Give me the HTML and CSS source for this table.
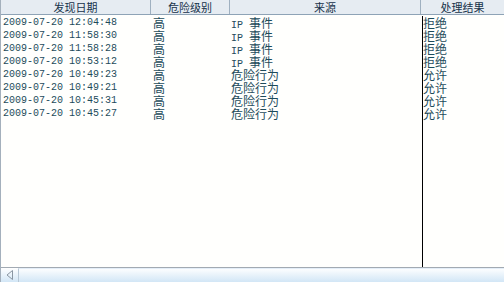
FILE: index.html
```html
<!DOCTYPE html>
<html lang="zh">
<head>
<meta charset="utf-8">
<link rel="stylesheet" href="styles.css">
</head>
<body>
<div class="grid">
  <div class="head">
    <div class="hc">发现日期</div>
    <div class="hc">危险级别</div>
    <div class="hc">来源</div>
    <div class="hc">处理结果</div>
  </div>
  <div class="body">
    <div class="col c1">
      <div class="cell mono">2009-07-20 12:04:48</div>
      <div class="cell mono">2009-07-20 11:58:30</div>
      <div class="cell mono">2009-07-20 11:58:28</div>
      <div class="cell mono">2009-07-20 10:53:12</div>
      <div class="cell mono">2009-07-20 10:49:23</div>
      <div class="cell mono">2009-07-20 10:49:21</div>
      <div class="cell mono">2009-07-20 10:45:31</div>
      <div class="cell mono">2009-07-20 10:45:27</div>
    </div>
    <div class="col c2">
      <div class="cell">高</div>
      <div class="cell">高</div>
      <div class="cell">高</div>
      <div class="cell">高</div>
      <div class="cell">高</div>
      <div class="cell">高</div>
      <div class="cell">高</div>
      <div class="cell">高</div>
    </div>
    <div class="col c3">
      <div class="cell"><span class="ip">IP </span>事件</div>
      <div class="cell"><span class="ip">IP </span>事件</div>
      <div class="cell"><span class="ip">IP </span>事件</div>
      <div class="cell"><span class="ip">IP </span>事件</div>
      <div class="cell">危险行为</div>
      <div class="cell">危险行为</div>
      <div class="cell">危险行为</div>
      <div class="cell">危险行为</div>
    </div>
    <div class="col c4">
      <div class="cell">拒绝</div>
      <div class="cell">拒绝</div>
      <div class="cell">拒绝</div>
      <div class="cell">拒绝</div>
      <div class="cell">允许</div>
      <div class="cell">允许</div>
      <div class="cell">允许</div>
      <div class="cell">允许</div>
    </div>
  </div>
  <div class="hscroll">
    <div class="arrow"><svg width="10" height="12" viewBox="0 0 10 12"><path d="M7.5 1.5 L2 6 L7.5 10.5 Z" fill="none" stroke="#8a96a2" stroke-width="1"/></svg></div>
    <div class="thumb"></div>
  </div>
</div>
</body>
</html>
```
FILE: styles.css
```css
html, body {
  margin: 0;
  padding: 0;
  background: #fffffd;
}
body {
  width: 504px;
  height: 282px;
  overflow: hidden;
  font-family: "Noto Sans CJK SC", "Noto Sans", sans-serif;
  font-size: 12px;
  color: #1d4b5b;
}
.grid {
  display: flex;
  flex-direction: column;
  height: 282px;
  border-left: 1px solid #a4b0bc;
  box-sizing: border-box;
}
.head {
  display: grid;
  grid-template-columns: 150px 79px 191px 83px;
  height: 15px;
  background: #e6ecf2;
  border-bottom: 1px solid #8ea3b6;
  box-sizing: border-box;
}
.hc {
  text-align: center;
  line-height: 14px;
  height: 14px;
  font-size: 11px;
  color: #16324a;
  border-right: 1px solid #9fb0c0;
  white-space: nowrap;
}
.hc:last-child {
  border-right: none;
}
.body {
  flex: 1;
  display: grid;
  grid-template-columns: 150px 79px 192px 82px;
  padding-top: 1px;
}
.col {
  display: flex;
  flex-direction: column;
}
.c1 { padding-left: 2px; }
.c2 { padding-left: 2px; }
.c3 { padding-left: 1px; }
.c4 {
  border-left: 1px solid #000;
  padding-left: 0;
}
.cell {
  height: 13px;
  line-height: 13px;
  white-space: nowrap;
  font-size: 12px;
}
.mono {
  font-family: "Liberation Mono", "DejaVu Sans Mono", monospace;
  font-size: 10px;
}
.ip {
  font-family: "Liberation Mono", "DejaVu Sans Mono", monospace;
  font-size: 10px;
}
.hscroll {
  height: 15px;
  display: flex;
  border-top: 1px solid #a2aab2;
  background: linear-gradient(#ffffff, #d2e6f6);
  box-sizing: border-box;
}
.arrow {
  width: 17px;
  display: flex;
  align-items: center;
  justify-content: center;
}
.thumb {
  flex: 1;
  border-left: 1px solid #b8c8d6;
  border-top: 1px solid #e4eef8;
}
```
